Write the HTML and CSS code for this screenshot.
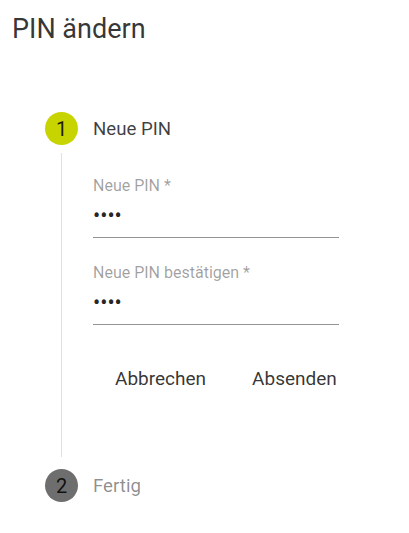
FILE: index.html
```html
<!DOCTYPE html>
<html lang="de">
<head>
<meta charset="utf-8">
<title>PIN ändern</title>
<link rel="stylesheet" href="styles.css">
</head>
<body>
<div class="dialog">
  <h1 class="title">PIN ändern</h1>
  <div class="stepper">
    <div class="step-header">
      <div class="step-icon step-icon--active">1</div>
      <div class="step-label step-label--active">Neue PIN</div>
    </div>
    <div class="step-content">
      <div class="field field--first">
        <label class="field-label">Neue PIN *</label>
        <input class="field-input" type="password" value="1234">
      </div>
      <div class="field">
        <label class="field-label">Neue PIN bestätigen *</label>
        <input class="field-input" type="password" value="1234">
      </div>
      <div class="actions">
        <button class="btn">Abbrechen</button>
        <button class="btn">Absenden</button>
      </div>
    </div>
    <div class="step-header step-header--last">
      <div class="step-icon step-icon--inactive">2</div>
      <div class="step-label">Fertig</div>
    </div>
  </div>
</div>
</body>
</html>
```
FILE: styles.css
```css
html, body {
  margin: 0;
  padding: 0;
  background: #ffffff;
}
body {
  font-family: Roboto, "Liberation Sans", Arial, sans-serif;
  color: rgba(0, 0, 0, 0.87);
}
.dialog {
  width: 409px;
  height: 533px;
  box-sizing: border-box;
  padding: 13px 0 0 12px;
}
.title {
  margin: 0;
  font-size: 27px;
  line-height: 32px;
  font-weight: 400;
  color: rgba(0, 0, 0, 0.8);
}
.stepper {
  margin-top: 67px;
  padding-left: 33px;
}
.step-header {
  display: flex;
  align-items: center;
  height: 33px;
}
.step-header--last {
  margin-top: 12px;
}
.step-icon {
  width: 33px;
  height: 33px;
  border-radius: 50%;
  display: flex;
  align-items: center;
  justify-content: center;
  font-size: 20px;
  color: rgba(0, 0, 0, 0.87);
  flex: none;
}
.step-icon--active {
  background: #c8d400;
}
.step-icon--inactive {
  background: #6e6e6e;
}
.step-label {
  margin-left: 15px;
  font-size: 18.67px;
  color: rgba(0, 0, 0, 0.45);
}
.step-label--active {
  color: rgba(0, 0, 0, 0.75);
}
.step-content {
  margin-left: 16px;
  margin-top: 8px;
  border-left: 1px solid #e0e0e0;
  padding: 24px 0 55px 31px;
}
.field {
  display: flex;
  flex-direction: column;
  width: 246px;
  margin-top: 26px;
}
.field--first {
  margin-top: 0;
}
.field-label {
  font-size: 16px;
  line-height: 18px;
  color: rgba(0, 0, 0, 0.38);
}
.field-input {
  margin-top: 8px;
  border: none;
  border-bottom: 1px solid rgba(0, 0, 0, 0.42);
  outline: none;
  padding: 0 0 9px 0;
  height: 35px;
  box-sizing: border-box;
  width: 100%;
  font-family: Roboto, "Liberation Sans", Arial, sans-serif;
  font-size: 21.33px;
  line-height: 26px;
  color: rgba(0, 0, 0, 0.87);
  background: transparent;
}
.actions {
  display: flex;
  gap: 2px;
  margin-top: 29px;
}
.btn {
  height: 48px;
  padding: 0 22px;
  border: none;
  background: transparent;
  font-family: Roboto, "Liberation Sans", Arial, sans-serif;
  font-size: 19px;
  font-weight: 400;
  color: rgba(0, 0, 0, 0.8);
  cursor: pointer;
}
```
